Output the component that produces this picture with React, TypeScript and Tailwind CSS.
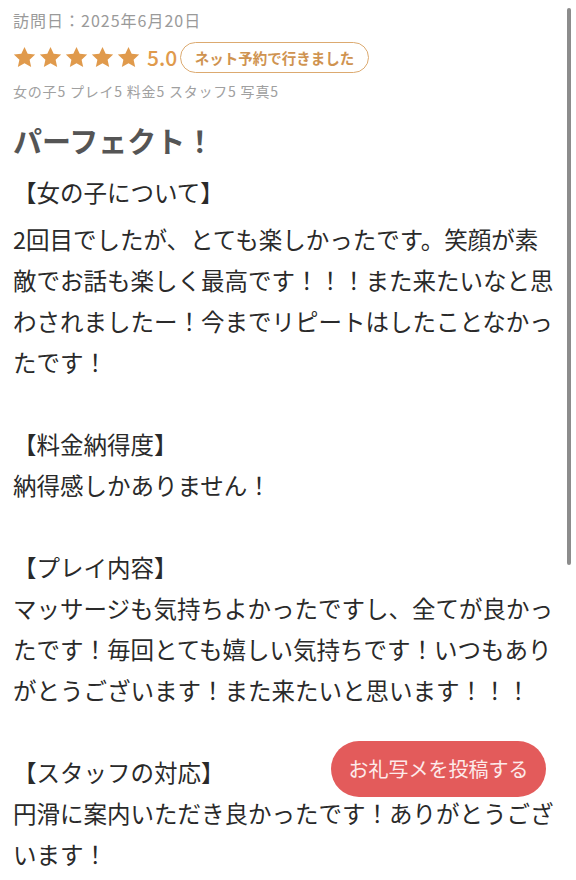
import React from "react";

const font = { fontFamily: '"Noto Sans CJK JP", "Noto Sans", sans-serif' };

const sections = [
    {
        title: "【女の子について】",
        body: "2回目でしたが、とても楽しかったです。笑顔が素敵でお話も楽しく最高です！！！また来たいなと思わされましたー！今までリピートはしたことなかったです！",
    },
    { title: "【料金納得度】", body: "納得感しかありません！" },
    {
        title: "【プレイ内容】",
        body: "マッサージも気持ちよかったですし、全てが良かったです！毎回とても嬉しい気持ちです！いつもありがとうございます！また来たいと思います！！！",
    },
    {
        title: "【スタッフの対応】",
        body: "円滑に案内いただき良かったです！ありがとうございます！",
    },
];

function Star() {
    return (
        <svg viewBox="0 0 24 24" className="w-[25px] h-[25px]" fill="#e09a4c">
            <path d="M12 1.8l3.05 6.6 7.2.8-5.35 4.9 1.5 7.1L12 17.6l-6.4 3.6 1.5-7.1L1.75 9.2l7.2-.8z" />
        </svg>
    );
}

export default function App() {
    return (
        <div className="relative min-h-[880px] bg-white text-[#333] overflow-hidden" style={font}>
            <div className="pl-[13px] pr-[20px] pt-[8px]">
                {/* visit meta */}
                <div className="text-[16px] leading-[24px] text-[#9a9a9a] tracking-[1px]">訪問日：2025年6月20日</div>

                <div className="mt-[10px] flex items-center">
                    <div className="flex items-center gap-[1px] -ml-[1px]">
                        {[0, 1, 2, 3, 4].map((i) => (
                            <Star key={i} />
                        ))}
                    </div>
                    <span className="ml-[6px] text-[21px] leading-none font-medium text-[#e09a4c]">5.0</span>
                    <span className="ml-[3px] h-[31px] px-[13.5px] flex items-center rounded-full border-[1.5px] border-[#dcaa70] text-[14.5px] font-bold text-[#cf9350]">
                        ネット予約で行きました
                    </span>
                </div>

                <div className="mt-[8px] text-[14px] leading-[20px] text-[#a0a0a0] tracking-[0.8px]">
                    女の子5 プレイ5 料金5 スタッフ5 写真5
                </div>

                <h1 className="mt-[19px] text-[29px] leading-[40px] font-bold text-[#555]">パーフェクト！</h1>

                {/* review body */}
                <div className="mt-[12px] text-[23.5px] leading-[41px] text-[#2a2a2a]">
                    {sections.map((s, i) => (
                        <div key={s.title} className={i > 0 ? "mt-[41px]" : ""}>
                            <div className={i === 0 ? "mb-[6px]" : ""}>{s.title}</div>
                            <p className="break-all">{s.body}</p>
                        </div>
                    ))}
                </div>
            </div>

            {/* scroll indicator */}
            <div className="absolute right-[5px] top-[8px] w-[4px] h-[557px] rounded-full bg-[#8c8c8c]" />

            {/* floating action */}
            <button className="fixed right-[30px] bottom-[83px] w-[215px] h-[56px] rounded-full bg-[#e35b5b] text-[20px] text-[#fdeaea] flex items-center justify-center">
                お礼写メを投稿する
            </button>
        </div>
    );
}
